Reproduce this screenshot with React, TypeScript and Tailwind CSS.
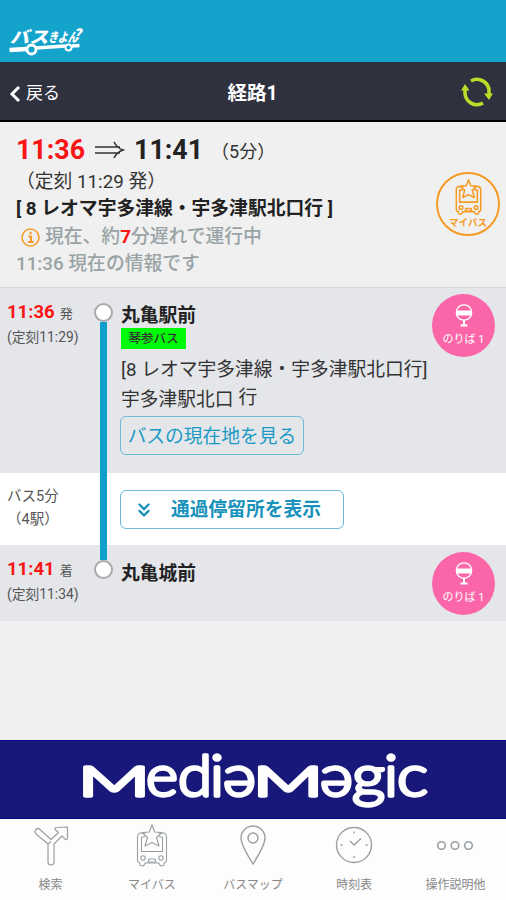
import React from "react"
import { ChevronsDown } from "lucide-react"

const BusStar = ({ className, strokeWidth = 1.1 }: { className: string, strokeWidth?: number }) => (
    <svg viewBox="0 0 32 44" className={className} fill="none" stroke="currentColor" strokeWidth={strokeWidth} strokeLinejoin="round">
        <path d="M10 9H5Q1.500 9 1.500 13V36Q1.500 38.500 4 39V40.500Q4 42 6 42T8.500 40.500L9 39H23L23.500 40.500Q24 42 26 42T28 40.500V39Q30.500 38.500 30.500 36V13Q30.500 9 27 9H22" />
        <path d="M9 13H5.500V27.500H26.500V13H23" />
        <path d="M16 1L18.700 8L26 8.500L20.500 13.500L23 22L16 18.500L9 22L11.500 13.500L6 8.500L13.300 8Z" />
        <circle cx="7" cy="34" r="2.200" />
        <circle cx="25" cy="34" r="2.200" />
        <path d="M13 35H19L20 38H12Z" />
    </svg>
)

const Logo = () => (
    <svg viewBox="0 0 92 62" className="w-[92px] h-[62px] text-white" fill="none" stroke="currentColor">
        <g fill="currentColor" stroke="none" fontWeight="900" className="font-['Noto_Sans_CJK_JP',sans-serif]">
            <text transform="translate(10 42.500) skewX(-14) scale(1.16 1)" fontSize="16.500">バス</text>
            <text transform="translate(48 42) skewX(-14) scale(0.75 1)" fontSize="13">きよん</text>
            <text transform="translate(73 40) skewX(-14)" fontSize="15">?</text>
        </g>
        <path d="M9.500 50L27 49" strokeWidth="4.500" />
        <path d="M36 48L65 46M72 46L79.500 45.500" strokeWidth="3.500" />
        <circle cx="31.500" cy="49.500" r="4.500" strokeWidth="2.800" />
        <circle cx="68.500" cy="47.500" r="3" strokeWidth="2" />
    </svg>
)

const NoribaBadge = () => (
    <div className="w-[63px] h-[63px] rounded-full bg-[#fb66a8] text-white flex flex-col items-center shrink-0">
        <svg viewBox="0 0 20 26" className="w-5 h-[26px] mt-[9px]" fill="none" stroke="currentColor">
            <circle cx="10" cy="9.500" r="7.700" strokeWidth="1.300" />
            <path d="M2 7.500H18V12.500H2Z" fill="currentColor" stroke="none" />
            <path d="M10 17V22M6.500 22.500H13.500" strokeWidth="2" />
        </svg>
        <span className="text-[11px] leading-[16px] mt-[3px] whitespace-pre">のりば 1</span>
    </div>
)

const Times = ({ time, label, planned }: { time: string, label: string, planned: string }) => (
    <div className="w-[94px] pl-[7px] pt-[12px] shrink-0">
        <p className="h-[25px] leading-[25px] whitespace-nowrap">
            <span className="text-[18.500px] font-bold text-[#fb1414]">{time}</span>
            <span className="text-[13px] text-[#555] ml-[5px]">{label}</span>
        </p>
        <p className="text-[13.800px] leading-[25px] text-[#555] whitespace-nowrap">(定刻{planned})</p>
    </div>
)

const Dot = () => <div className="w-[19px] h-[19px] rounded-full bg-white border-2 border-[#aaa] shrink-0" />

// x and width of every letter of the banner wordmark
const wordmark = [
    { char: "M", x: 78, width: 72, size: 42 },
    { char: "e", x: 146, width: 32, size: 57 },
    { char: "d", x: 178, width: 34, size: 57 },
    { char: "i", x: 210, width: 14, size: 57 },
    { char: "ə", x: 223, width: 33, size: 57 },
    { char: "M", x: 253, width: 70, size: 42 },
    { char: "ə", x: 320, width: 33, size: 57 },
    { char: "g", x: 352, width: 33, size: 57 },
    { char: "i", x: 384, width: 14, size: 57 },
    { char: "c", x: 397, width: 31, size: 57 },
]

const tabs = [
    {
        label: "検索",
        icon: (
            <svg viewBox="0 0 36 42" className="w-9 h-[42px]" fill="none" stroke="currentColor" strokeWidth="1.200" strokeLinejoin="round">
                <path d="M15 37V19L3 9Q1 6.500 3 4.500T7 4.500L18 14.500L25.500 7.500L22 4.500Q22 2.500 24 2.500L34.500 2V13Q34 15.500 32 14L29 11L21 19V37Q21 40 18 40T15 37Z" />
                <path d="M15 19L18 16.500" />
            </svg>
        ),
    },
    { label: "マイバス", icon: <BusStar className="w-8 h-[44px]" /> },
    {
        label: "バスマップ",
        icon: (
            <svg viewBox="0 0 26 42" className="w-[26px] h-[42px]" fill="none" stroke="currentColor" strokeWidth="1.400">
                <path d="M13 39Q1 20 1 13A12 12 0 0 1 25 13Q25 20 13 39Z" />
                <circle cx="13" cy="13" r="5" />
            </svg>
        ),
    },
    {
        label: "時刻表",
        icon: (
            <svg viewBox="0 0 38 42" className="w-[38px] h-[42px]" fill="none" stroke="currentColor" strokeWidth="1.400">
                <circle cx="19" cy="20" r="17.500" />
                <path d="M15 16L19 20L26 13.500M19 6.500V8.500M19 31V33M5.500 20H7.500M30.500 20H32.500" />
            </svg>
        ),
    },
    {
        label: "操作説明他",
        icon: (
            <svg viewBox="0 0 38 42" className="w-[38px] h-[42px]" fill="none" stroke="currentColor" strokeWidth="1.600">
                <circle cx="5.500" cy="20.500" r="3.800" />
                <circle cx="19" cy="20.500" r="3.800" />
                <circle cx="32.500" cy="20.500" r="3.800" />
            </svg>
        ),
    },
]

const App = () => {
    return (
        <div className="w-[506px] h-[900px] flex flex-col overflow-hidden bg-[#f0f0f0] text-[#333] font-[Roboto,'Noto_Sans_CJK_JP',sans-serif]">
            <header className="h-[62px] bg-[#14a3cb]">
                <Logo />
            </header>

            <nav className="h-[60px] bg-[#2f313f] border-b-2 border-black text-white grid grid-cols-3 items-center">
                <div className="flex items-center pl-[9px] pt-[5px]">
                    <svg viewBox="0 0 12 18" className="w-3 h-[18px]" fill="none" stroke="currentColor" strokeWidth="3">
                        <path d="M10 2L3 9L10 16" />
                    </svg>
                    <span className="text-[17px] ml-[5px]">戻る</span>
                </div>
                <h1 className="text-center text-[19.500px] font-bold pt-[5px] -ml-px">経路1</h1>
                <svg viewBox="0 0 32 30" className="w-8 h-[30px] justify-self-end mr-[13px] mt-px text-[#b9dc28]" fill="none" stroke="currentColor" strokeWidth="3.600">
                    <path d="M10 4A12 12 0 0 1 28 15V18M22 26A12 12 0 0 1 4 15V12" />
                    <path d="M23 16.500H32L28 23ZM0 13.500H8.500L4 7Z" fill="currentColor" stroke="none" />
                </svg>
            </nav>

            <section className="h-[165px] flex justify-between pl-4 pr-[6px]">
                <div className="pt-[11px] whitespace-pre text-[18.800px]">
                    <p className="flex items-center h-[34px]">
                        <span className="text-[26.800px] font-bold text-[#fb1414]">11:36</span>
                        <svg viewBox="0 0 30 20" className="w-[30px] h-5 ml-[10px] mr-[9px]" fill="none" stroke="currentColor" strokeWidth="1.600">
                            <path d="M0 7H25M0 13H25M19 2Q22 8 28 10Q22 12 19 18" />
                        </svg>
                        <span className="text-[26.800px] font-bold text-[#222]">11:41</span>
                        <span className="ml-[8px] pt-[2px] text-[18px]">（5分）</span>
                    </p>
                    <p className="leading-[27px] pt-[2px]">（定刻 11:29 発）</p>
                    <p className="leading-[27px] font-bold text-[#222]">[ 8 レオマ宇多津線・宇多津駅北口行 ]</p>
                    <p className="leading-[28px] flex items-center font-medium text-[#99a3a6]">
                        <svg viewBox="0 0 18 18" className="w-[19px] h-[19px] ml-[5px] mr-[5px] text-[#f79d2b]" fill="none" stroke="currentColor">
                            <circle cx="9" cy="9" r="8" strokeWidth="1.500" />
                            <path d="M9 3.500V6M7 8H9.500V13M6.500 13.200H12" strokeWidth="2" />
                        </svg>
                        現在、約<b className="text-[#fb1414]">7</b>分遅れで運行中
                    </p>
                    <p className="leading-[27px] font-medium text-[#99a3a6]">11:36 現在の情報です</p>
                </div>
                <div className="w-16 h-16 mt-[50px] rounded-full border-2 border-[#f59a22] text-[#f59a22] flex flex-col items-center shrink-0">
                    <BusStar className="w-[27px] h-[37px] mt-[5px]" strokeWidth={1.8} />
                    <span className="text-[9.500px] leading-[12px] mt-px font-bold">マイバス</span>
                </div>
            </section>

            <section className="h-[186px] flex bg-[#e4e6ea] border-t border-[#d4d6da]">
                <Times time="11:36" label="発" planned="11:29" />
                <div className="w-[19px] flex flex-col items-center pt-[15px]">
                    <Dot />
                    <div className="w-[7px] flex-1 bg-[#0f9fcb]" />
                </div>
                <div className="flex-1 pl-[8px] pt-[15px] whitespace-pre text-[18.750px]">
                    <h2 className="font-bold text-[#222] leading-[26px]">丸亀駅前</h2>
                    <span className="block w-[65px] h-[21px] -mt-px bg-[#00fb08] text-center text-[12.500px] leading-[22px] font-medium">琴参バス</span>
                    <p className="leading-[28px] mt-[7px]">[8 レオマ宇多津線・宇多津駅北口行]</p>
                    <p className="leading-[30px] mt-px flex">宇多津駅北口<span className="ml-[5px] -mt-[2px]">行</span></p>
                    <button className="-ml-px mt-px w-[184px] h-[39px] pt-[3px] border border-[#6db9d6] rounded-md leading-[34px] text-[#1b9ac4]">バスの現在地を見る</button>
                </div>
                <div className="w-0 flex justify-end mr-[11px] pt-[6px]">
                    <NoribaBadge />
                </div>
            </section>

            <section className="h-[72px] flex bg-white">
                <div className="w-[94px] pl-[7px] pt-[12px] text-[14.500px] leading-[23px] text-[#555]">
                    <p>バス5分</p>
                    <p>（4駅）</p>
                </div>
                <div className="w-[19px] flex justify-center">
                    <div className="w-[7px] bg-[#0f9fcb]" />
                </div>
                <button className="ml-[7px] mt-[17px] w-[224px] h-[39px] border border-[#6db9d6] rounded-md text-[#1792bb] text-[18.750px] font-bold flex items-center pl-[12px]">
                    <ChevronsDown className="w-[22px] h-[24px]" strokeWidth={2.5} />
                    <span className="ml-[16px] pt-[2px]">通過停留所を表示</span>
                </button>
            </section>

            <section className="h-[76px] flex bg-[#e4e6ea]">
                <Times time="11:41" label="着" planned="11:34" />
                <div className="w-[19px] flex flex-col items-center">
                    <div className="w-[7px] h-[15px] bg-[#0f9fcb]" />
                    <Dot />
                </div>
                <h2 className="flex-1 pl-[8px] pt-[16px] text-[18.750px] leading-[26px] font-bold text-[#222]">丸亀城前</h2>
                <div className="mr-[11px] pt-[7px]">
                    <NoribaBadge />
                </div>
            </section>

            <div className="mt-auto h-[79px] bg-[#18187a] border-y border-[#070780]">
                <svg viewBox="0 0 506 77" className="w-full h-full font-['Lato',sans-serif] font-light" fill="#fff" stroke="#fff" strokeWidth="3.400" strokeLinejoin="round" aria-label="mediamagic">
                    {wordmark.map((letter) => (
                        <text key={letter.x} x={letter.x} y="54.500" fontSize={letter.size} textLength={letter.width} lengthAdjust="spacingAndGlyphs">{letter.char}</text>
                    ))}
                </svg>
            </div>

            <footer className="h-[81px] shrink-0 bg-[#fdfdfd] grid grid-cols-5 text-[#9a9fa3]">
                {tabs.map((tab) => (
                    <div key={tab.label} className="flex flex-col items-center pt-[4px]">
                        <div className="h-[46px] flex items-center">{tab.icon}</div>
                        <span className="text-[12px] leading-[18px] mt-[7px] text-[#888]">{tab.label}</span>
                    </div>
                ))}
            </footer>
        </div>
    )
}

export default App
